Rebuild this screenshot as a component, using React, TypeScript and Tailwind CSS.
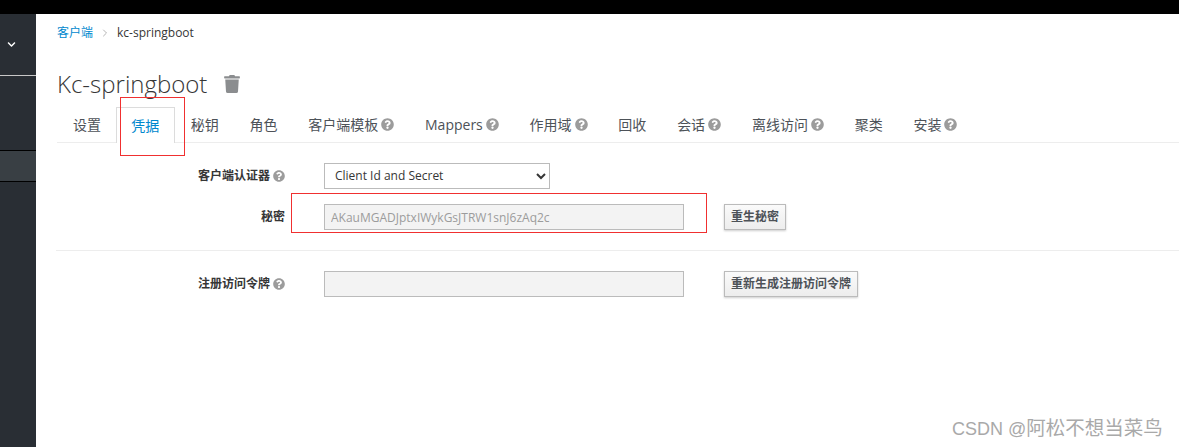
import { ChevronRight } from "lucide-react";
import { FaChevronDown, FaQuestionCircle, FaTrash } from "react-icons/fa";

const font = "font-['Open_Sans','Noto_Sans_CJK_SC',sans-serif]";

const tabs = [
  { name: "设置" },
  { name: "凭据", active: true },
  { name: "秘钥" },
  { name: "角色" },
  { name: "客户端模板", help: true },
  { name: "Mappers", help: true },
  { name: "作用域", help: true },
  { name: "回收" },
  { name: "会话", help: true },
  { name: "离线访问", help: true },
  { name: "聚类" },
  { name: "安装", help: true },
];

function Label({ text, help }: { text: string; help?: boolean }) {
  return (
    <label className="flex w-[228px] shrink-0 items-center justify-end text-xs font-bold text-[#363636]">
      {text}
      {help && <FaQuestionCircle className="ml-[3px] h-3 w-3 text-[#9c9c9c]" />}
    </label>
  );
}

function Button({ text }: { text: string }) {
  return (
    <button className="ml-10 h-[26px] border border-[#bbbbbb] bg-gradient-to-b from-[#fafafa] to-[#ededed] px-1.5 text-xs font-bold text-[#4d5258] shadow-[0_1px_2px_rgba(3,3,3,0.2)]">
      {text}
    </button>
  );
}

export default function App() {
  return (
    <div className={`${font} relative flex h-[447px] w-[1179px] flex-col overflow-hidden bg-white`}>
      <div className="h-[14px] shrink-0 bg-black" />
      <div className="flex min-h-0 flex-1">
        {/* Sidebar */}
        <aside className="flex w-9 shrink-0 flex-col bg-[#292e34]">
          <div className="flex h-[62px] shrink-0 items-center border-b border-[#c8c8c8] pl-[7px]">
            <FaChevronDown className="h-[9px] w-[9px] text-white" />
          </div>
          <div className="mt-[74px] h-[32px] shrink-0 border-y border-black bg-[#393f44]" />
        </aside>

        {/* Main */}
        <main className="min-w-0 flex-1 pl-[21px]">
          <nav className="flex h-9 items-center pt-0.5 text-xs text-[#363636]">
            <a className="text-[#0088ce]">客户端</a>
            <ChevronRight strokeWidth={1.5} className="mx-[6px] h-3 w-3 text-[#9c9c9c]" />
            <span>kc-springboot</span>
          </nav>

          <h1 className="mt-4 flex h-[35px] items-center text-2xl font-light text-[#363636]">
            Kc-springboot
            <FaTrash className="ml-[17px] h-[18px] w-[16px] text-[#8b8d8f]" />
          </h1>

          <div className="mt-1.5 flex h-9 border-b border-[#ededed] pl-[0.5px] text-sm text-[#4d5258]">
            {tabs.map((t) =>
              t.active ? (
                <div
                  key={t.name}
                  className="flex h-9 items-center border-x border-t border-[#dcdcdc] bg-white pl-[14px] pr-[15px] text-[#0088ce]"
                >
                  {t.name}
                </div>
              ) : (
                <div key={t.name} className="flex h-[35px] items-center whitespace-nowrap px-[15.4px]">
                  {t.name}
                  {t.help && <FaQuestionCircle className="ml-[3px] h-[13px] w-[13px] text-[#9c9c9c]" />}
                </div>
              ),
            )}
          </div>

          <div className="mt-[20px] flex h-[26px] items-center">
            <Label text="客户端认证器" help />
            <select className="ml-[39px] h-[26px] w-[226px] border border-[#bbbbbb] bg-white px-[6px] pb-px text-xs text-[#363636]">
              <option>Client Id and Secret</option>
            </select>
          </div>

          <div className="mt-[15px] flex h-[26px] items-center">
            <Label text="秘密" />
            <input
              disabled
              value="AKauMGADJptxIWykGsJTRW1snJ6zAq2c"
              className="ml-[39px] h-[26px] w-[360px] border border-[#bbbbbb] bg-[#f3f3f3] px-[6px] text-xs text-[#9c9c9c]"
            />
            <Button text="重生秘密" />
          </div>

          <hr className="-ml-px mt-5 border-[#ededed]" />

          <div className="mt-5 flex h-[26px] items-center">
            <Label text="注册访问令牌" help />
            <input disabled className="ml-[39px] h-[26px] w-[360px] border border-[#bbbbbb] bg-[#f3f3f3]" />
            <Button text="重新生成注册访问令牌" />
          </div>
        </main>
      </div>

      {/* Red annotation boxes */}
      <div className="absolute left-[120px] top-[97px] h-[59px] w-[65px] border border-[#f03030]" />
      <div className="absolute left-[291px] top-[193px] h-[40px] w-[416px] border border-[#f03030]" />

      {/* Watermark */}
      <div className="absolute left-[952px] top-[416px] whitespace-nowrap font-['Liberation_Sans','Noto_Sans_CJK_SC',sans-serif] text-lg leading-6 text-[#a9a9a9]">
        CSDN @<span className="text-[19.5px]">阿松不想当菜鸟</span>
      </div>
    </div>
  );
}
